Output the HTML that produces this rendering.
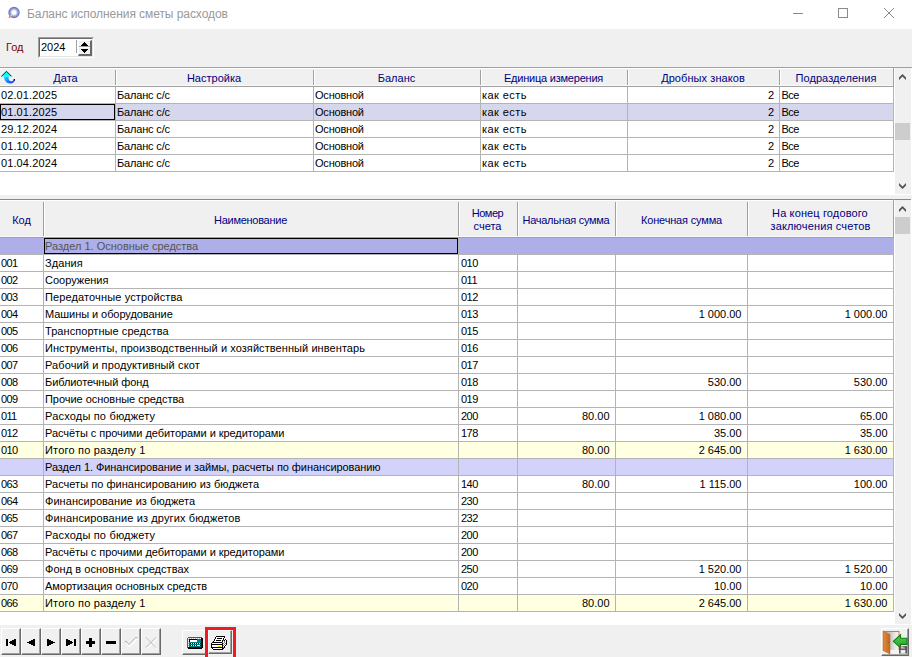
<!DOCTYPE html>
<html><head><meta charset="utf-8"><title>Баланс исполнения сметы расходов</title>
<style>
*{box-sizing:border-box;margin:0;padding:0}
html,body{width:912px;height:657px;overflow:hidden;background:#f0f0f0}
body{position:relative;font-family:"Liberation Sans",sans-serif;font-size:11px;color:#000}
.a{position:absolute}
.t{position:absolute;white-space:nowrap;line-height:13px;height:13px}
.hd{color:#000080}
</style></head>
<body>
<div class="a" style="left:0px;top:0px;width:912px;height:29px;background:#fff;"></div>
<svg class="a" style="left:6px;top:5px" width="16" height="16" viewBox="0 0 16 16">
<defs><radialGradient id="rg" cx="50%" cy="50%" r="50%"><stop offset="0.28" stop-color="#fff"/><stop offset="0.55" stop-color="#aab2dc"/><stop offset="0.82" stop-color="#6a76bc"/><stop offset="1" stop-color="#6a76bc" stop-opacity="0"/></radialGradient></defs>
<circle cx="8" cy="7.5" r="6.2" fill="url(#rg)"/>
<path d="M3.3 12.4L4.6 11.1" stroke="#e8603c" stroke-width="1.3" stroke-linecap="round"/><path d="M4.8 10.9L5.7 10" stroke="#f8c8b0" stroke-width="1.2" stroke-linecap="round"/>
</svg>
<div class="t " style="left:27px;top:7px;letter-spacing:-0.065px;color:#999;font-size:12px;line-height:15px;height:15px;">Баланс исполнения сметы расходов</div>
<svg class="a" style="left:780px;top:0" width="132" height="29" viewBox="0 0 132 29">
<path d="M13 13.5H23" stroke="#8a8a8a" stroke-width="1" fill="none"/>
<rect x="58.5" y="8.5" width="9" height="9" stroke="#8a8a8a" stroke-width="1" fill="none"/>
<path d="M104 8L114 18M114 8L104 18" stroke="#8a8a8a" stroke-width="1" fill="none"/>
</svg>
<div class="t " style="left:6px;top:41px;color:#800000;">Год</div>
<div class="a" style="left:38px;top:37px;width:56px;height:21px;background:#fff;border-top:1px solid #a0a0a0;border-left:1px solid #a0a0a0;border-right:1px solid #fff;border-bottom:1px solid #fff;"></div>
<div class="a" style="left:39px;top:38px;width:54px;height:19px;background:#fff;border-top:1px solid #696969;border-left:1px solid #696969;border-right:1px solid #e3e3e3;border-bottom:1px solid #e3e3e3;"></div>
<div class="t " style="left:41px;top:41px;">2024</div>
<div class="a" style="left:76px;top:40px;width:1px;height:13px;background:#a0a0a0;"></div>
<div class="a" style="left:78px;top:40px;width:14px;height:16px;background:#f0f0f0;border-left:1px solid #fff;border-top:1px solid #fff;border-right:2px solid #696969;border-bottom:2px solid #696969;"></div>
<div class="a" style="left:79px;top:46px;width:11px;height:1px;background:#a0a0a0;"></div>
<div class="a" style="left:79px;top:47px;width:11px;height:1px;background:#fff;"></div>
<svg class="a" style="left:81px;top:42px" width="7" height="4" viewBox="0 0 7 4" shape-rendering="crispEdges"><rect x="3" y="0" width="1" height="1" fill="#000"/><rect x="2" y="1" width="3" height="1" fill="#000"/><rect x="1" y="2" width="5" height="1" fill="#000"/><rect x="0" y="3" width="7" height="1" fill="#000"/></svg>
<svg class="a" style="left:81px;top:49px" width="7" height="4" viewBox="0 0 7 4" shape-rendering="crispEdges"><rect x="0" y="0" width="7" height="1" fill="#000"/><rect x="1" y="1" width="5" height="1" fill="#000"/><rect x="2" y="2" width="3" height="1" fill="#000"/><rect x="3" y="3" width="1" height="1" fill="#000"/></svg>
<div class="a" style="left:0px;top:67px;width:912px;height:128px;background:#fff;"></div>
<div class="a" style="left:0px;top:67px;width:912px;height:1px;background:#a0a0a0;"></div>
<div class="a" style="left:0px;top:68px;width:894px;height:18px;background:#f0f0f0;"></div>
<div class="a" style="left:0px;top:68px;width:894px;height:1px;background:#fff;"></div>
<div class="t hd" style="left:16px;top:72px;width:99px;text-align:center;">Дата</div>
<div class="t hd" style="left:115px;top:72px;width:198px;text-align:center;">Настройка</div>
<div class="t hd" style="left:313px;top:72px;width:167px;text-align:center;">Баланс</div>
<div class="t hd" style="left:480px;top:72px;width:147px;text-align:center;letter-spacing:-0.219px;">Единица измерения</div>
<div class="t hd" style="left:627px;top:72px;width:152px;text-align:center;letter-spacing:0.077px;">Дробных знаков</div>
<div class="t hd" style="left:779px;top:72px;width:114px;text-align:center;letter-spacing:0.083px;">Подразделения</div>
<div class="a" style="left:115px;top:70px;width:1px;height:16px;background:#a0a0a0;"></div>
<div class="a" style="left:313px;top:70px;width:1px;height:16px;background:#a0a0a0;"></div>
<div class="a" style="left:480px;top:70px;width:1px;height:16px;background:#a0a0a0;"></div>
<div class="a" style="left:627px;top:70px;width:1px;height:16px;background:#a0a0a0;"></div>
<div class="a" style="left:779px;top:70px;width:1px;height:16px;background:#a0a0a0;"></div>
<div class="a" style="left:893px;top:67px;width:1px;height:20px;background:#a0a0a0;"></div>
<div class="a" style="left:116px;top:70px;width:1px;height:16px;background:#fff;"></div>
<div class="a" style="left:314px;top:70px;width:1px;height:16px;background:#fff;"></div>
<div class="a" style="left:481px;top:70px;width:1px;height:16px;background:#fff;"></div>
<div class="a" style="left:628px;top:70px;width:1px;height:16px;background:#fff;"></div>
<div class="a" style="left:780px;top:70px;width:1px;height:16px;background:#fff;"></div>
<div class="a" style="left:0px;top:85px;width:893px;height:1px;background:#fafafa;"></div>
<div class="a" style="left:0px;top:86px;width:894px;height:1px;background:#a0a0a0;"></div>
<div class="a" style="left:0px;top:103px;width:894px;height:1px;background:#b4b4b4;"></div>
<div class="t " style="left:1px;top:89px;letter-spacing:0.111px;">02.01.2025</div>
<div class="t " style="left:117px;top:89px;letter-spacing:-0.167px;">Баланс с/с</div>
<div class="t " style="left:315px;top:89px;letter-spacing:-0.214px;">Основной</div>
<div class="t " style="left:482px;top:89px;letter-spacing:0.429px;">как есть</div>
<div class="t " style="left:627px;top:89px;width:147px;text-align:right;">2</div>
<div class="t " style="left:781.5px;top:89px;letter-spacing:-0.600px;">Все</div>
<div class="a" style="left:0px;top:104px;width:893px;height:16px;background:#d6d6ec;"></div>
<div class="a" style="left:0px;top:120px;width:894px;height:1px;background:#b4b4b4;"></div>
<div class="t " style="left:1px;top:106px;letter-spacing:0.111px;">01.01.2025</div>
<div class="t " style="left:117px;top:106px;letter-spacing:-0.167px;">Баланс с/с</div>
<div class="t " style="left:315px;top:106px;letter-spacing:-0.214px;">Основной</div>
<div class="t " style="left:482px;top:106px;letter-spacing:0.429px;">как есть</div>
<div class="t " style="left:627px;top:106px;width:147px;text-align:right;">2</div>
<div class="t " style="left:781.5px;top:106px;letter-spacing:-0.600px;">Все</div>
<div class="a" style="left:0px;top:137px;width:894px;height:1px;background:#b4b4b4;"></div>
<div class="t " style="left:1px;top:123px;letter-spacing:0.111px;">29.12.2024</div>
<div class="t " style="left:117px;top:123px;letter-spacing:-0.167px;">Баланс с/с</div>
<div class="t " style="left:315px;top:123px;letter-spacing:-0.214px;">Основной</div>
<div class="t " style="left:482px;top:123px;letter-spacing:0.429px;">как есть</div>
<div class="t " style="left:627px;top:123px;width:147px;text-align:right;">2</div>
<div class="t " style="left:781.5px;top:123px;letter-spacing:-0.600px;">Все</div>
<div class="a" style="left:0px;top:154px;width:894px;height:1px;background:#b4b4b4;"></div>
<div class="t " style="left:1px;top:140px;letter-spacing:0.111px;">01.10.2024</div>
<div class="t " style="left:117px;top:140px;letter-spacing:-0.167px;">Баланс с/с</div>
<div class="t " style="left:315px;top:140px;letter-spacing:-0.214px;">Основной</div>
<div class="t " style="left:482px;top:140px;letter-spacing:0.429px;">как есть</div>
<div class="t " style="left:627px;top:140px;width:147px;text-align:right;">2</div>
<div class="t " style="left:781.5px;top:140px;letter-spacing:-0.600px;">Все</div>
<div class="a" style="left:0px;top:171px;width:894px;height:1px;background:#b4b4b4;"></div>
<div class="t " style="left:1px;top:157px;letter-spacing:0.111px;">01.04.2024</div>
<div class="t " style="left:117px;top:157px;letter-spacing:-0.167px;">Баланс с/с</div>
<div class="t " style="left:315px;top:157px;letter-spacing:-0.214px;">Основной</div>
<div class="t " style="left:482px;top:157px;letter-spacing:0.429px;">как есть</div>
<div class="t " style="left:627px;top:157px;width:147px;text-align:right;">2</div>
<div class="t " style="left:781.5px;top:157px;letter-spacing:-0.600px;">Все</div>
<div class="a" style="left:115px;top:87px;width:1px;height:85px;background:#b4b4b4;"></div>
<div class="a" style="left:313px;top:87px;width:1px;height:85px;background:#b4b4b4;"></div>
<div class="a" style="left:480px;top:87px;width:1px;height:85px;background:#b4b4b4;"></div>
<div class="a" style="left:627px;top:87px;width:1px;height:85px;background:#b4b4b4;"></div>
<div class="a" style="left:779px;top:87px;width:1px;height:85px;background:#b4b4b4;"></div>
<div class="a" style="left:893px;top:87px;width:1px;height:85px;background:#b4b4b4;"></div>
<div class="a" style="left:0px;top:104px;width:115px;height:16px;background:transparent;border:1px solid #000;"></div>
<svg class="a" style="left:0px;top:69px" width="17" height="16" viewBox="0 0 17 16">
<defs><linearGradient id="tg" x1="0" y1="0" x2="1" y2="1"><stop offset="0" stop-color="#00f0ff"/><stop offset="0.45" stop-color="#1a8cff"/><stop offset="1" stop-color="#2a20ff"/></linearGradient></defs>
<path d="M4 7.5C4 11 6 14.5 10.5 14.5C13 14.5 14.5 13 15 10.5L13.5 11C12.5 12.5 11 12.6 9.5 11.6C8.5 10.8 8.6 9 8.6 7.5Z" fill="url(#tg)"/>
<path d="M6.5 2.3L1.8 7.4H11.2Z" fill="#00ffff"/>
<path d="M1.4 7.4L6.5 2.3L11.6 7.4" stroke="#000" stroke-width="0.9" fill="none"/>
<rect x="13.6" y="10" width="1.4" height="1.6" fill="#000060"/>
</svg>
<div class="a" style="left:895px;top:68px;width:16px;height:126px;background:#f0f0f0;"></div>
<div class="a" style="left:895px;top:123px;width:15px;height:17px;background:#cdcdcd;"></div>
<svg class="a" style="left:899px;top:73.9px" width="7" height="7" viewBox="0 0 7 7"><path d="M0 3.5L3.5 0L7 3.5V6.1L3.5 2.6L0 6.1Z" fill="#505050"/></svg>
<svg class="a" style="left:899px;top:182.9px" width="7" height="7" viewBox="0 0 7 7"><path d="M0 2.6L3.5 6.1L7 2.6V0L3.5 3.5L0 0Z" fill="#505050"/></svg>
<div class="a" style="left:0px;top:199px;width:912px;height:426px;background:#fff;"></div>
<div class="a" style="left:0px;top:199px;width:911px;height:1px;background:#8a8a8a;"></div>
<div class="a" style="left:0px;top:200px;width:894px;height:37px;background:#f0f0f0;"></div>
<div class="a" style="left:0px;top:200px;width:894px;height:1px;background:#fff;"></div>
<div class="a" style="left:43px;top:202px;width:1px;height:35px;background:#a0a0a0;"></div>
<div class="a" style="left:458px;top:202px;width:1px;height:35px;background:#a0a0a0;"></div>
<div class="a" style="left:517px;top:202px;width:1px;height:35px;background:#a0a0a0;"></div>
<div class="a" style="left:615px;top:202px;width:1px;height:35px;background:#a0a0a0;"></div>
<div class="a" style="left:747px;top:202px;width:1px;height:35px;background:#a0a0a0;"></div>
<div class="a" style="left:893px;top:199px;width:1px;height:39px;background:#a0a0a0;"></div>
<div class="a" style="left:44px;top:202px;width:1px;height:34px;background:#fff;"></div>
<div class="a" style="left:459px;top:202px;width:1px;height:34px;background:#fff;"></div>
<div class="a" style="left:518px;top:202px;width:1px;height:34px;background:#fff;"></div>
<div class="a" style="left:616px;top:202px;width:1px;height:34px;background:#fff;"></div>
<div class="a" style="left:748px;top:202px;width:1px;height:34px;background:#fff;"></div>
<div class="a" style="left:0px;top:236px;width:893px;height:1px;background:#fafafa;"></div>
<div class="t hd" style="left:0px;top:214px;width:43px;text-align:center;">Код</div>
<div class="t hd" style="left:43px;top:214px;width:415px;text-align:center;letter-spacing:-0.273px;">Наименование</div>
<div class="t hd" style="left:458px;top:207px;width:59px;text-align:center;letter-spacing:-0.500px;">Номер</div>
<div class="t hd" style="left:458px;top:220px;width:59px;text-align:center;">счета</div>
<div class="t hd" style="left:517px;top:214px;width:98px;text-align:center;letter-spacing:-0.286px;">Начальная сумма</div>
<div class="t hd" style="left:615px;top:214px;width:133px;text-align:center;letter-spacing:-0.169px;">Конечная сумма</div>
<div class="t hd" style="left:747px;top:207px;width:146px;text-align:center;letter-spacing:0.125px;">На конец годового</div>
<div class="t hd" style="left:747px;top:220px;width:147px;text-align:center;letter-spacing:0.163px;">заключения счетов</div>
<div class="a" style="left:0px;top:237px;width:894px;height:1px;background:#a0a0a0;"></div>
<div class="a" style="left:0px;top:238px;width:893px;height:16px;background:#aeaee8;"></div>
<div class="a" style="left:0px;top:254px;width:894px;height:1px;background:#b4b4b4;"></div>
<div class="t " style="left:1px;top:240px;"></div>
<div class="t " style="left:45px;top:240px;color:#555;">Раздел 1. Основные средства</div>
<div class="t " style="left:461px;top:240px;"></div>
<div class="a" style="left:0px;top:271px;width:894px;height:1px;background:#b4b4b4;"></div>
<div class="t " style="left:1px;top:257px;letter-spacing:-0.650px;">001</div>
<div class="t " style="left:45px;top:257px;letter-spacing:0.080px;">Здания</div>
<div class="t " style="left:461px;top:257px;letter-spacing:-0.500px;">010</div>
<div class="a" style="left:0px;top:288px;width:894px;height:1px;background:#b4b4b4;"></div>
<div class="t " style="left:1px;top:274px;letter-spacing:-0.650px;">002</div>
<div class="t " style="left:45px;top:274px;">Сооружения</div>
<div class="t " style="left:461px;top:274px;letter-spacing:-0.500px;">011</div>
<div class="a" style="left:0px;top:305px;width:894px;height:1px;background:#b4b4b4;"></div>
<div class="t " style="left:1px;top:291px;letter-spacing:-0.650px;">003</div>
<div class="t " style="left:45px;top:291px;letter-spacing:0.127px;">Передаточные устройства</div>
<div class="t " style="left:461px;top:291px;letter-spacing:-0.500px;">012</div>
<div class="a" style="left:0px;top:322px;width:894px;height:1px;background:#b4b4b4;"></div>
<div class="t " style="left:1px;top:308px;letter-spacing:-0.650px;">004</div>
<div class="t " style="left:45px;top:308px;letter-spacing:-0.060px;">Машины и оборудование</div>
<div class="t " style="left:461px;top:308px;letter-spacing:-0.500px;">013</div>
<div class="t " style="left:615px;top:308px;width:126.5px;text-align:right;">1 000.00</div>
<div class="t " style="left:747px;top:308px;width:140.5px;text-align:right;">1 000.00</div>
<div class="a" style="left:0px;top:339px;width:894px;height:1px;background:#b4b4b4;"></div>
<div class="t " style="left:1px;top:325px;letter-spacing:-0.650px;">005</div>
<div class="t " style="left:45px;top:325px;letter-spacing:0.060px;">Транспортные средства</div>
<div class="t " style="left:461px;top:325px;letter-spacing:-0.500px;">015</div>
<div class="a" style="left:0px;top:356px;width:894px;height:1px;background:#b4b4b4;"></div>
<div class="t " style="left:1px;top:342px;letter-spacing:-0.650px;">006</div>
<div class="t " style="left:45px;top:342px;letter-spacing:0.072px;">Инструменты, производственный и хозяйственный инвентарь</div>
<div class="t " style="left:461px;top:342px;letter-spacing:-0.500px;">016</div>
<div class="a" style="left:0px;top:373px;width:894px;height:1px;background:#b4b4b4;"></div>
<div class="t " style="left:1px;top:359px;letter-spacing:-0.650px;">007</div>
<div class="t " style="left:45px;top:359px;letter-spacing:0.108px;">Рабочий и продуктивный скот</div>
<div class="t " style="left:461px;top:359px;letter-spacing:-0.500px;">017</div>
<div class="a" style="left:0px;top:390px;width:894px;height:1px;background:#b4b4b4;"></div>
<div class="t " style="left:1px;top:376px;letter-spacing:-0.650px;">008</div>
<div class="t " style="left:45px;top:376px;letter-spacing:-0.075px;">Библиотечный фонд</div>
<div class="t " style="left:461px;top:376px;letter-spacing:-0.500px;">018</div>
<div class="t " style="left:615px;top:376px;width:126.5px;text-align:right;">530.00</div>
<div class="t " style="left:747px;top:376px;width:140.5px;text-align:right;">530.00</div>
<div class="a" style="left:0px;top:407px;width:894px;height:1px;background:#b4b4b4;"></div>
<div class="t " style="left:1px;top:393px;letter-spacing:-0.650px;">009</div>
<div class="t " style="left:45px;top:393px;letter-spacing:-0.035px;">Прочие основные средства</div>
<div class="t " style="left:461px;top:393px;letter-spacing:-0.500px;">019</div>
<div class="a" style="left:0px;top:424px;width:894px;height:1px;background:#b4b4b4;"></div>
<div class="t " style="left:1px;top:410px;letter-spacing:-0.650px;">011</div>
<div class="t " style="left:45px;top:410px;letter-spacing:0.188px;">Расходы по бюджету</div>
<div class="t " style="left:461px;top:410px;letter-spacing:-0.500px;">200</div>
<div class="t " style="left:517px;top:410px;width:92.5px;text-align:right;">80.00</div>
<div class="t " style="left:615px;top:410px;width:126.5px;text-align:right;">1 080.00</div>
<div class="t " style="left:747px;top:410px;width:140.5px;text-align:right;">65.00</div>
<div class="a" style="left:0px;top:441px;width:894px;height:1px;background:#b4b4b4;"></div>
<div class="t " style="left:1px;top:427px;letter-spacing:-0.650px;">012</div>
<div class="t " style="left:45px;top:427px;letter-spacing:-0.059px;">Расчёты с прочими дебиторами и кредиторами</div>
<div class="t " style="left:461px;top:427px;letter-spacing:-0.500px;">178</div>
<div class="t " style="left:615px;top:427px;width:126.5px;text-align:right;">35.00</div>
<div class="t " style="left:747px;top:427px;width:140.5px;text-align:right;">35.00</div>
<div class="a" style="left:0px;top:442px;width:893px;height:16px;background:#ffffe1;"></div>
<div class="a" style="left:0px;top:458px;width:894px;height:1px;background:#b4b4b4;"></div>
<div class="t " style="left:1px;top:444px;letter-spacing:-0.650px;">010</div>
<div class="t " style="left:45px;top:444px;letter-spacing:0.188px;">Итого по разделу 1</div>
<div class="t " style="left:461px;top:444px;"></div>
<div class="t " style="left:517px;top:444px;width:92.5px;text-align:right;">80.00</div>
<div class="t " style="left:615px;top:444px;width:126.5px;text-align:right;">2 645.00</div>
<div class="t " style="left:747px;top:444px;width:140.5px;text-align:right;">1 630.00</div>
<div class="a" style="left:0px;top:459px;width:893px;height:16px;background:#d2d2fa;"></div>
<div class="a" style="left:0px;top:475px;width:894px;height:1px;background:#b4b4b4;"></div>
<div class="t " style="left:1px;top:461px;"></div>
<div class="t " style="left:45px;top:461px;letter-spacing:-0.067px;">Раздел 1. Финансирование и займы, расчеты по финансированию</div>
<div class="t " style="left:461px;top:461px;"></div>
<div class="a" style="left:0px;top:492px;width:894px;height:1px;background:#b4b4b4;"></div>
<div class="t " style="left:1px;top:478px;letter-spacing:-0.650px;">063</div>
<div class="t " style="left:45px;top:478px;letter-spacing:0.034px;">Расчеты по финансированию из бюджета</div>
<div class="t " style="left:461px;top:478px;letter-spacing:-0.500px;">140</div>
<div class="t " style="left:517px;top:478px;width:92.5px;text-align:right;">80.00</div>
<div class="t " style="left:615px;top:478px;width:126.5px;text-align:right;">1 115.00</div>
<div class="t " style="left:747px;top:478px;width:140.5px;text-align:right;">100.00</div>
<div class="a" style="left:0px;top:509px;width:894px;height:1px;background:#b4b4b4;"></div>
<div class="t " style="left:1px;top:495px;letter-spacing:-0.650px;">064</div>
<div class="t " style="left:45px;top:495px;letter-spacing:0.050px;">Финансирование из бюджета</div>
<div class="t " style="left:461px;top:495px;letter-spacing:-0.500px;">230</div>
<div class="a" style="left:0px;top:526px;width:894px;height:1px;background:#b4b4b4;"></div>
<div class="t " style="left:1px;top:512px;letter-spacing:-0.650px;">065</div>
<div class="t " style="left:45px;top:512px;letter-spacing:0.122px;">Финансирование из других бюджетов</div>
<div class="t " style="left:461px;top:512px;letter-spacing:-0.500px;">232</div>
<div class="a" style="left:0px;top:543px;width:894px;height:1px;background:#b4b4b4;"></div>
<div class="t " style="left:1px;top:529px;letter-spacing:-0.650px;">067</div>
<div class="t " style="left:45px;top:529px;letter-spacing:0.188px;">Расходы по бюджету</div>
<div class="t " style="left:461px;top:529px;letter-spacing:-0.500px;">200</div>
<div class="a" style="left:0px;top:560px;width:894px;height:1px;background:#b4b4b4;"></div>
<div class="t " style="left:1px;top:546px;letter-spacing:-0.650px;">068</div>
<div class="t " style="left:45px;top:546px;letter-spacing:-0.059px;">Расчёты с прочими дебиторами и кредиторами</div>
<div class="t " style="left:461px;top:546px;letter-spacing:-0.500px;">200</div>
<div class="a" style="left:0px;top:577px;width:894px;height:1px;background:#b4b4b4;"></div>
<div class="t " style="left:1px;top:563px;letter-spacing:-0.650px;">069</div>
<div class="t " style="left:45px;top:563px;letter-spacing:0.050px;">Фонд в основных средствах</div>
<div class="t " style="left:461px;top:563px;letter-spacing:-0.500px;">250</div>
<div class="t " style="left:615px;top:563px;width:126.5px;text-align:right;">1 520.00</div>
<div class="t " style="left:747px;top:563px;width:140.5px;text-align:right;">1 520.00</div>
<div class="a" style="left:0px;top:594px;width:894px;height:1px;background:#b4b4b4;"></div>
<div class="t " style="left:1px;top:580px;letter-spacing:-0.650px;">070</div>
<div class="t " style="left:45px;top:580px;letter-spacing:-0.044px;">Амортизация основных средств</div>
<div class="t " style="left:461px;top:580px;letter-spacing:-0.500px;">020</div>
<div class="t " style="left:615px;top:580px;width:126.5px;text-align:right;">10.00</div>
<div class="t " style="left:747px;top:580px;width:140.5px;text-align:right;">10.00</div>
<div class="a" style="left:0px;top:595px;width:893px;height:16px;background:#ffffe1;"></div>
<div class="a" style="left:0px;top:611px;width:894px;height:1px;background:#b4b4b4;"></div>
<div class="t " style="left:1px;top:597px;letter-spacing:-0.650px;">066</div>
<div class="t " style="left:45px;top:597px;letter-spacing:0.188px;">Итого по разделу 1</div>
<div class="t " style="left:461px;top:597px;"></div>
<div class="t " style="left:517px;top:597px;width:92.5px;text-align:right;">80.00</div>
<div class="t " style="left:615px;top:597px;width:126.5px;text-align:right;">2 645.00</div>
<div class="t " style="left:747px;top:597px;width:140.5px;text-align:right;">1 630.00</div>
<div class="a" style="left:43px;top:238px;width:1px;height:374px;background:#b4b4b4;"></div>
<div class="a" style="left:458px;top:238px;width:1px;height:374px;background:#b4b4b4;"></div>
<div class="a" style="left:517px;top:238px;width:1px;height:374px;background:#b4b4b4;"></div>
<div class="a" style="left:615px;top:238px;width:1px;height:374px;background:#b4b4b4;"></div>
<div class="a" style="left:747px;top:238px;width:1px;height:374px;background:#b4b4b4;"></div>
<div class="a" style="left:893px;top:238px;width:1px;height:374px;background:#b4b4b4;"></div>
<div class="a" style="left:44px;top:238px;width:414px;height:16px;background:transparent;border:1px solid #000;"></div>
<div class="a" style="left:895px;top:200px;width:16px;height:424px;background:#f0f0f0;"></div>
<div class="a" style="left:895px;top:217px;width:15px;height:17px;background:#cdcdcd;"></div>
<svg class="a" style="left:899px;top:205.9px" width="7" height="7" viewBox="0 0 7 7"><path d="M0 3.5L3.5 0L7 3.5V6.1L3.5 2.6L0 6.1Z" fill="#505050"/></svg>
<svg class="a" style="left:899px;top:612.9px" width="7" height="7" viewBox="0 0 7 7"><path d="M0 2.6L3.5 6.1L7 2.6V0L3.5 3.5L0 0Z" fill="#505050"/></svg>
<div class="a" style="left:1px;top:628px;width:20px;height:27px;background:#f0f0f0;border-left:1px solid #fff;border-top:1px solid #fff;border-right:1px solid #696969;border-bottom:1px solid #696969;"></div>
<div class="a" style="left:2px;top:629px;width:18px;height:25px;background:#f0f0f0;border-right:1px solid #a0a0a0;border-bottom:1px solid #a0a0a0;"></div>
<div class="a" style="left:21px;top:628px;width:20px;height:27px;background:#f0f0f0;border-left:1px solid #fff;border-top:1px solid #fff;border-right:1px solid #696969;border-bottom:1px solid #696969;"></div>
<div class="a" style="left:22px;top:629px;width:18px;height:25px;background:#f0f0f0;border-right:1px solid #a0a0a0;border-bottom:1px solid #a0a0a0;"></div>
<div class="a" style="left:41px;top:628px;width:20px;height:27px;background:#f0f0f0;border-left:1px solid #fff;border-top:1px solid #fff;border-right:1px solid #696969;border-bottom:1px solid #696969;"></div>
<div class="a" style="left:42px;top:629px;width:18px;height:25px;background:#f0f0f0;border-right:1px solid #a0a0a0;border-bottom:1px solid #a0a0a0;"></div>
<div class="a" style="left:61px;top:628px;width:20px;height:27px;background:#f0f0f0;border-left:1px solid #fff;border-top:1px solid #fff;border-right:1px solid #696969;border-bottom:1px solid #696969;"></div>
<div class="a" style="left:62px;top:629px;width:18px;height:25px;background:#f0f0f0;border-right:1px solid #a0a0a0;border-bottom:1px solid #a0a0a0;"></div>
<div class="a" style="left:81px;top:628px;width:20px;height:27px;background:#f0f0f0;border-left:1px solid #fff;border-top:1px solid #fff;border-right:1px solid #696969;border-bottom:1px solid #696969;"></div>
<div class="a" style="left:82px;top:629px;width:18px;height:25px;background:#f0f0f0;border-right:1px solid #a0a0a0;border-bottom:1px solid #a0a0a0;"></div>
<div class="a" style="left:101px;top:628px;width:20px;height:27px;background:#f0f0f0;border-left:1px solid #fff;border-top:1px solid #fff;border-right:1px solid #696969;border-bottom:1px solid #696969;"></div>
<div class="a" style="left:102px;top:629px;width:18px;height:25px;background:#f0f0f0;border-right:1px solid #a0a0a0;border-bottom:1px solid #a0a0a0;"></div>
<div class="a" style="left:121px;top:628px;width:20px;height:27px;background:#f0f0f0;border-left:1px solid #fff;border-top:1px solid #fff;border-right:1px solid #696969;border-bottom:1px solid #696969;"></div>
<div class="a" style="left:122px;top:629px;width:18px;height:25px;background:#f0f0f0;border-right:1px solid #a0a0a0;border-bottom:1px solid #a0a0a0;"></div>
<div class="a" style="left:141px;top:628px;width:20px;height:27px;background:#f0f0f0;border-left:1px solid #fff;border-top:1px solid #fff;border-right:1px solid #696969;border-bottom:1px solid #696969;"></div>
<div class="a" style="left:142px;top:629px;width:18px;height:25px;background:#f0f0f0;border-right:1px solid #a0a0a0;border-bottom:1px solid #a0a0a0;"></div>
<svg class="a" style="left:6px;top:639px" width="10" height="7" viewBox="0 0 10 7" shape-rendering="crispEdges"><rect x="0" y="0" width="2" height="1" fill="#000"/><rect x="8" y="0" width="2" height="1" fill="#000"/><rect x="0" y="1" width="2" height="1" fill="#000"/><rect x="6" y="1" width="4" height="1" fill="#000"/><rect x="0" y="2" width="2" height="1" fill="#000"/><rect x="4" y="2" width="6" height="1" fill="#000"/><rect x="0" y="3" width="2" height="1" fill="#000"/><rect x="3" y="3" width="7" height="1" fill="#000"/><rect x="0" y="4" width="2" height="1" fill="#000"/><rect x="4" y="4" width="6" height="1" fill="#000"/><rect x="0" y="5" width="2" height="1" fill="#000"/><rect x="6" y="5" width="4" height="1" fill="#000"/><rect x="0" y="6" width="2" height="1" fill="#000"/><rect x="8" y="6" width="2" height="1" fill="#000"/></svg>
<svg class="a" style="left:27px;top:639px" width="8" height="7" viewBox="0 0 8 7" shape-rendering="crispEdges"><rect x="6" y="0" width="2" height="1" fill="#000"/><rect x="4" y="1" width="4" height="1" fill="#000"/><rect x="2" y="2" width="6" height="1" fill="#000"/><rect x="0" y="3" width="8" height="1" fill="#000"/><rect x="2" y="4" width="6" height="1" fill="#000"/><rect x="4" y="5" width="4" height="1" fill="#000"/><rect x="6" y="6" width="2" height="1" fill="#000"/></svg>
<svg class="a" style="left:47px;top:639px" width="8" height="7" viewBox="0 0 8 7" shape-rendering="crispEdges"><rect x="0" y="0" width="2" height="1" fill="#000"/><rect x="0" y="1" width="4" height="1" fill="#000"/><rect x="0" y="2" width="6" height="1" fill="#000"/><rect x="0" y="3" width="8" height="1" fill="#000"/><rect x="0" y="4" width="6" height="1" fill="#000"/><rect x="0" y="5" width="4" height="1" fill="#000"/><rect x="0" y="6" width="2" height="1" fill="#000"/></svg>
<svg class="a" style="left:66px;top:639px" width="10" height="7" viewBox="0 0 10 7" shape-rendering="crispEdges"><rect x="0" y="0" width="2" height="1" fill="#000"/><rect x="8" y="0" width="2" height="1" fill="#000"/><rect x="0" y="1" width="4" height="1" fill="#000"/><rect x="8" y="1" width="2" height="1" fill="#000"/><rect x="0" y="2" width="6" height="1" fill="#000"/><rect x="8" y="2" width="2" height="1" fill="#000"/><rect x="0" y="3" width="7" height="1" fill="#000"/><rect x="8" y="3" width="2" height="1" fill="#000"/><rect x="0" y="4" width="6" height="1" fill="#000"/><rect x="8" y="4" width="2" height="1" fill="#000"/><rect x="0" y="5" width="4" height="1" fill="#000"/><rect x="8" y="5" width="2" height="1" fill="#000"/><rect x="0" y="6" width="2" height="1" fill="#000"/><rect x="8" y="6" width="2" height="1" fill="#000"/></svg>
<svg class="a" style="left:86px;top:638px" width="9" height="9" viewBox="0 0 9 9" shape-rendering="crispEdges"><rect x="3" y="0" width="3" height="1" fill="#000"/><rect x="3" y="1" width="3" height="1" fill="#000"/><rect x="3" y="2" width="3" height="1" fill="#000"/><rect x="0" y="3" width="9" height="1" fill="#000"/><rect x="0" y="4" width="9" height="1" fill="#000"/><rect x="0" y="5" width="9" height="1" fill="#000"/><rect x="3" y="6" width="3" height="1" fill="#000"/><rect x="3" y="7" width="3" height="1" fill="#000"/><rect x="3" y="8" width="3" height="1" fill="#000"/></svg>
<svg class="a" style="left:106px;top:641px" width="10" height="3" viewBox="0 0 10 3" shape-rendering="crispEdges"><rect x="0" y="0" width="10" height="1" fill="#000"/><rect x="0" y="1" width="10" height="1" fill="#000"/><rect x="0" y="2" width="10" height="1" fill="#000"/></svg>
<svg class="a" style="left:121px;top:628px" width="20" height="27" viewBox="0 0 20 27">
<path d="M4.5 14.5L7.5 17.5L15 10L16.5 10.5" stroke="#fff" stroke-width="1.2" fill="none" transform="translate(1,1)"/>
<path d="M3.5 14L5 13L8 16.5L14.5 9.5L16.5 10" stroke="#b4b4b4" stroke-width="1" fill="none"/></svg>
<svg class="a" style="left:141px;top:628px" width="20" height="27" viewBox="0 0 20 27">
<path d="M5 9.5l10 10M15 9.5l-10 10" stroke="#fff" stroke-width="1.2" fill="none" transform="translate(1,1)"/>
<path d="M5 9.5l10 10M15 9.5l-10 10" stroke="#b4b4b4" stroke-width="1" fill="none"/></svg>
<div class="a" style="left:182px;top:630px;width:26px;height:25px;background:#f0f0f0;border-left:1px solid #fff;border-top:1px solid #fff;border-right:1px solid #696969;border-bottom:1px solid #696969;"></div>
<div class="a" style="left:183px;top:631px;width:24px;height:23px;background:#f0f0f0;border-right:1px solid #a0a0a0;border-bottom:1px solid #a0a0a0;"></div>
<svg class="a" style="left:187px;top:637px" width="16" height="12" viewBox="0 0 16 12" shape-rendering="crispEdges"><rect x="1" y="0" width="14" height="1" fill="#008080"/><rect x="0" y="1" width="1" height="1" fill="#008080"/><rect x="1" y="1" width="1" height="1" fill="#fff"/><rect x="2" y="1" width="1" height="1" fill="#00ffff"/><rect x="3" y="1" width="1" height="1" fill="#fff"/><rect x="4" y="1" width="1" height="1" fill="#00ffff"/><rect x="5" y="1" width="1" height="1" fill="#fff"/><rect x="6" y="1" width="1" height="1" fill="#00ffff"/><rect x="7" y="1" width="1" height="1" fill="#fff"/><rect x="8" y="1" width="1" height="1" fill="#00ffff"/><rect x="9" y="1" width="1" height="1" fill="#fff"/><rect x="10" y="1" width="1" height="1" fill="#00ffff"/><rect x="11" y="1" width="1" height="1" fill="#fff"/><rect x="12" y="1" width="1" height="1" fill="#00ffff"/><rect x="13" y="1" width="1" height="1" fill="#fff"/><rect x="14" y="1" width="1" height="1" fill="#000080"/><rect x="15" y="1" width="1" height="1" fill="#000"/><rect x="0" y="2" width="1" height="1" fill="#008080"/><rect x="1" y="2" width="1" height="1" fill="#00ffff"/><rect x="2" y="2" width="8" height="1" fill="#000"/><rect x="10" y="2" width="4" height="1" fill="#008080"/><rect x="14" y="2" width="1" height="1" fill="#000080"/><rect x="15" y="2" width="1" height="1" fill="#000"/><rect x="0" y="3" width="1" height="1" fill="#008080"/><rect x="1" y="3" width="1" height="1" fill="#fff"/><rect x="2" y="3" width="1" height="1" fill="#000"/><rect x="3" y="3" width="7" height="1" fill="#fff"/><rect x="10" y="3" width="4" height="1" fill="#008080"/><rect x="14" y="3" width="1" height="1" fill="#000080"/><rect x="15" y="3" width="1" height="1" fill="#000"/><rect x="0" y="4" width="1" height="1" fill="#008080"/><rect x="1" y="4" width="1" height="1" fill="#00ffff"/><rect x="2" y="4" width="1" height="1" fill="#000"/><rect x="3" y="4" width="7" height="1" fill="#fff"/><rect x="10" y="4" width="4" height="1" fill="#008080"/><rect x="14" y="4" width="1" height="1" fill="#000080"/><rect x="15" y="4" width="1" height="1" fill="#000"/><rect x="0" y="5" width="1" height="1" fill="#008080"/><rect x="1" y="5" width="1" height="1" fill="#fff"/><rect x="2" y="5" width="12" height="1" fill="#008080"/><rect x="14" y="5" width="1" height="1" fill="#000080"/><rect x="15" y="5" width="1" height="1" fill="#000"/><rect x="0" y="6" width="1" height="1" fill="#008080"/><rect x="1" y="6" width="1" height="1" fill="#00ffff"/><rect x="2" y="6" width="1" height="1" fill="#008080"/><rect x="3" y="6" width="1" height="1" fill="#000"/><rect x="4" y="6" width="1" height="1" fill="#fff"/><rect x="5" y="6" width="1" height="1" fill="#000"/><rect x="6" y="6" width="1" height="1" fill="#fff"/><rect x="7" y="6" width="1" height="1" fill="#000"/><rect x="8" y="6" width="1" height="1" fill="#fff"/><rect x="9" y="6" width="1" height="1" fill="#000"/><rect x="10" y="6" width="1" height="1" fill="#fff"/><rect x="11" y="6" width="1" height="1" fill="#000"/><rect x="12" y="6" width="1" height="1" fill="#fff"/><rect x="13" y="6" width="1" height="1" fill="#000"/><rect x="14" y="6" width="1" height="1" fill="#000080"/><rect x="15" y="6" width="1" height="1" fill="#000"/><rect x="0" y="7" width="1" height="1" fill="#008080"/><rect x="1" y="7" width="1" height="1" fill="#fff"/><rect x="2" y="7" width="12" height="1" fill="#008080"/><rect x="14" y="7" width="1" height="1" fill="#000080"/><rect x="15" y="7" width="1" height="1" fill="#000"/><rect x="0" y="8" width="1" height="1" fill="#008080"/><rect x="1" y="8" width="1" height="1" fill="#00ffff"/><rect x="2" y="8" width="1" height="1" fill="#008080"/><rect x="3" y="8" width="1" height="1" fill="#000"/><rect x="4" y="8" width="1" height="1" fill="#fff"/><rect x="5" y="8" width="1" height="1" fill="#000"/><rect x="6" y="8" width="1" height="1" fill="#fff"/><rect x="7" y="8" width="1" height="1" fill="#000"/><rect x="8" y="8" width="1" height="1" fill="#fff"/><rect x="9" y="8" width="1" height="1" fill="#000"/><rect x="10" y="8" width="3" height="1" fill="#fff"/><rect x="13" y="8" width="1" height="1" fill="#000"/><rect x="14" y="8" width="1" height="1" fill="#000080"/><rect x="15" y="8" width="1" height="1" fill="#000"/><rect x="0" y="9" width="1" height="1" fill="#008080"/><rect x="1" y="9" width="1" height="1" fill="#fff"/><rect x="2" y="9" width="12" height="1" fill="#008080"/><rect x="14" y="9" width="1" height="1" fill="#000080"/><rect x="15" y="9" width="1" height="1" fill="#000"/><rect x="0" y="10" width="1" height="1" fill="#008080"/><rect x="1" y="10" width="14" height="1" fill="#000080"/><rect x="15" y="10" width="1" height="1" fill="#000"/><rect x="1" y="11" width="14" height="1" fill="#000"/></svg>
<div class="a" style="left:208px;top:630px;width:24px;height:24px;background:#f0f0f0;border-left:1px solid #fff;border-top:1px solid #fff;border-right:1px solid #696969;border-bottom:1px solid #696969;"></div>
<div class="a" style="left:209px;top:631px;width:22px;height:22px;background:#f0f0f0;border-right:1px solid #a0a0a0;border-bottom:1px solid #a0a0a0;"></div>
<svg class="a" style="left:211px;top:636px" width="16" height="14" viewBox="0 0 16 14" shape-rendering="crispEdges"><rect x="5" y="0" width="9" height="1" fill="#000"/><rect x="4" y="1" width="1" height="1" fill="#000"/><rect x="5" y="1" width="8" height="1" fill="#fff"/><rect x="13" y="1" width="1" height="1" fill="#000"/><rect x="4" y="2" width="1" height="1" fill="#000"/><rect x="5" y="2" width="1" height="1" fill="#fff"/><rect x="6" y="2" width="5" height="1" fill="#000"/><rect x="11" y="2" width="1" height="1" fill="#fff"/><rect x="12" y="2" width="1" height="1" fill="#000"/><rect x="3" y="3" width="1" height="1" fill="#000"/><rect x="4" y="3" width="8" height="1" fill="#fff"/><rect x="12" y="3" width="1" height="1" fill="#000"/><rect x="13" y="3" width="1" height="1" fill="#fff"/><rect x="14" y="3" width="1" height="1" fill="#000"/><rect x="3" y="4" width="1" height="1" fill="#000"/><rect x="4" y="4" width="1" height="1" fill="#fff"/><rect x="5" y="4" width="5" height="1" fill="#000"/><rect x="10" y="4" width="1" height="1" fill="#fff"/><rect x="11" y="4" width="1" height="1" fill="#000"/><rect x="12" y="4" width="1" height="1" fill="#808080"/><rect x="13" y="4" width="1" height="1" fill="#000"/><rect x="14" y="4" width="1" height="1" fill="#fff"/><rect x="15" y="4" width="1" height="1" fill="#000"/><rect x="2" y="5" width="1" height="1" fill="#000"/><rect x="3" y="5" width="8" height="1" fill="#fff"/><rect x="11" y="5" width="1" height="1" fill="#000"/><rect x="12" y="5" width="1" height="1" fill="#fff"/><rect x="13" y="5" width="1" height="1" fill="#808080"/><rect x="14" y="5" width="1" height="1" fill="#fff"/><rect x="15" y="5" width="1" height="1" fill="#000"/><rect x="1" y="6" width="10" height="1" fill="#000"/><rect x="11" y="6" width="1" height="1" fill="#808080"/><rect x="12" y="6" width="1" height="1" fill="#fff"/><rect x="13" y="6" width="1" height="1" fill="#808080"/><rect x="14" y="6" width="1" height="1" fill="#fff"/><rect x="15" y="6" width="1" height="1" fill="#000"/><rect x="0" y="7" width="1" height="1" fill="#000"/><rect x="1" y="7" width="10" height="1" fill="#fff"/><rect x="11" y="7" width="1" height="1" fill="#000"/><rect x="12" y="7" width="1" height="1" fill="#808080"/><rect x="13" y="7" width="1" height="1" fill="#fff"/><rect x="14" y="7" width="1" height="1" fill="#808080"/><rect x="15" y="7" width="1" height="1" fill="#000"/><rect x="0" y="8" width="12" height="1" fill="#000"/><rect x="12" y="8" width="1" height="1" fill="#fff"/><rect x="13" y="8" width="1" height="1" fill="#808080"/><rect x="14" y="8" width="1" height="1" fill="#fff"/><rect x="15" y="8" width="1" height="1" fill="#000"/><rect x="0" y="9" width="1" height="1" fill="#000"/><rect x="1" y="9" width="10" height="1" fill="#fff"/><rect x="11" y="9" width="1" height="1" fill="#000"/><rect x="12" y="9" width="1" height="1" fill="#808080"/><rect x="13" y="9" width="1" height="1" fill="#fff"/><rect x="14" y="9" width="1" height="1" fill="#000"/><rect x="0" y="10" width="1" height="1" fill="#000"/><rect x="1" y="10" width="6" height="1" fill="#fff"/><rect x="7" y="10" width="3" height="1" fill="#e8e000"/><rect x="10" y="10" width="1" height="1" fill="#fff"/><rect x="11" y="10" width="1" height="1" fill="#000"/><rect x="12" y="10" width="1" height="1" fill="#fff"/><rect x="13" y="10" width="1" height="1" fill="#000"/><rect x="0" y="11" width="12" height="1" fill="#000"/><rect x="12" y="11" width="1" height="1" fill="#808080"/><rect x="13" y="11" width="1" height="1" fill="#000"/><rect x="1" y="12" width="1" height="1" fill="#000"/><rect x="2" y="12" width="9" height="1" fill="#fff"/><rect x="11" y="12" width="2" height="1" fill="#000"/><rect x="2" y="13" width="10" height="1" fill="#000"/></svg>
<div class="a" style="left:205px;top:627px;width:31px;height:40px;background:transparent;border:3px solid #ed1c24;"></div>
<div class="a" style="left:881px;top:628px;width:28px;height:28px;background:#f0f0f0;border-left:1px solid #fff;border-top:1px solid #fff;border-right:1px solid #696969;border-bottom:1px solid #696969;"></div>
<div class="a" style="left:882px;top:629px;width:26px;height:26px;background:#f0f0f0;border-right:1px solid #a0a0a0;border-bottom:1px solid #a0a0a0;"></div>
<svg class="a" style="left:881px;top:628px" width="28" height="28" viewBox="0 0 28 28">
<defs><linearGradient id="dg" x1="0" y1="0" x2="1" y2="0"><stop offset="0" stop-color="#a8a8a8"/><stop offset="0.4" stop-color="#c2c2c2"/><stop offset="0.75" stop-color="#e8e8e8"/><stop offset="1" stop-color="#f8f8f8"/></linearGradient>
<linearGradient id="og" x1="0" y1="0" x2="1" y2="0"><stop offset="0" stop-color="#e08a3c"/><stop offset="1" stop-color="#c86a1c"/></linearGradient>
<linearGradient id="gg" x1="0" y1="0" x2="0" y2="1"><stop offset="0" stop-color="#58cc58"/><stop offset="1" stop-color="#28a428"/></linearGradient></defs>
<rect x="2.5" y="3.5" width="15.5" height="19" fill="url(#dg)" stroke="#d87828" stroke-width="1"/>
<path d="M8 22h10v4H9z" fill="#f4f4f4"/>
<path d="M2 3L9 6.5V26L2 22.5Z" fill="url(#og)" stroke="#b86018" stroke-width=".5"/>
<rect x="6.5" y="13.5" width="1.5" height="1.5" fill="#806850"/>
<path d="M12.3 13.3L19.5 6.8V10.3H26V16.4H19.5V19.8Z" fill="url(#gg)" stroke="#0c800c" stroke-width="1.1"/>
<rect x="18" y="18" width="8" height="7.5" fill="#585858"/>
<rect x="20" y="18.4" width="4" height="2.2" fill="#c8c8c8"/><rect x="22.6" y="18.4" width="1" height="1.6" fill="#585858"/>
<rect x="19.6" y="22" width="4.8" height="3.5" fill="#ececec"/>
</svg>
</body></html>
